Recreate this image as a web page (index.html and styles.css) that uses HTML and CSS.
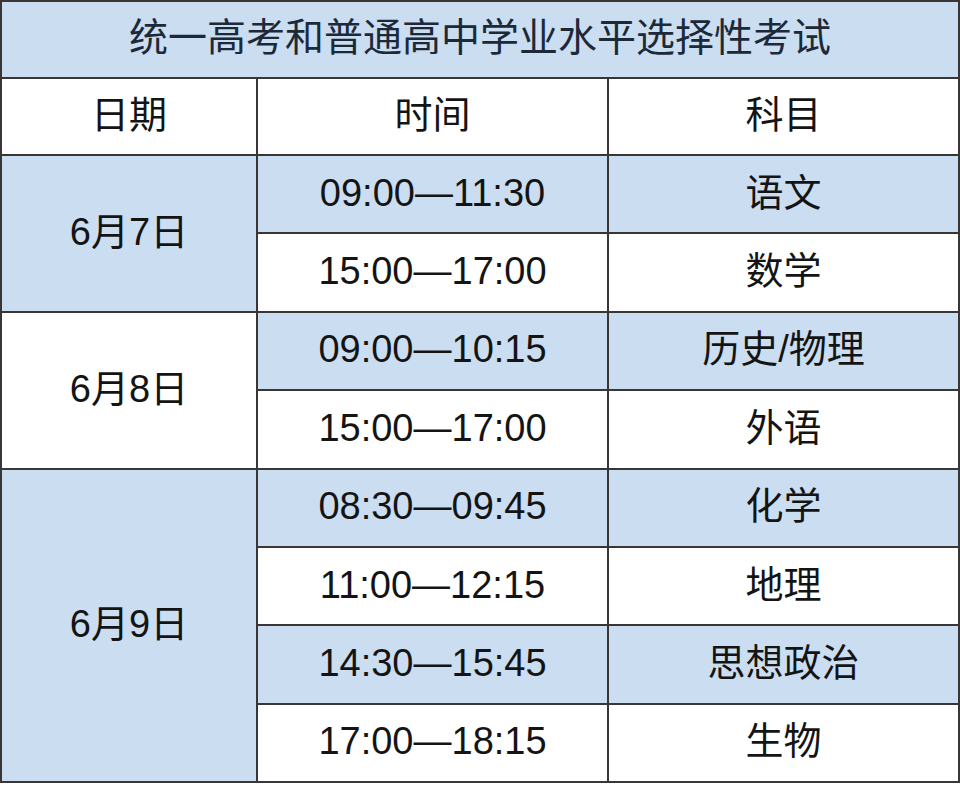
FILE: index.html
```html
<!DOCTYPE html>
<html lang="zh-CN">
<head>
<meta charset="utf-8">
<title>统一高考和普通高中学业水平选择性考试</title>
<link rel="stylesheet" href="styles.css">
</head>
<body>
<table class="schedule">
  <colgroup>
    <col class="col-date">
    <col class="col-time">
    <col class="col-subject">
  </colgroup>
  <thead>
    <tr class="title-row"><th colspan="3" class="title">统一高考和普通高中学业水平选择性考试</th></tr>
    <tr class="head-row"><th>日期</th><th>时间</th><th>科目</th></tr>
  </thead>
  <tbody>
    <tr class="blue"><td rowspan="2" class="date blue">6月7日</td><td>09:00—11:30</td><td>语文</td></tr>
    <tr><td>15:00—17:00</td><td>数学</td></tr>
    <tr class="blue"><td rowspan="2" class="date white">6月8日</td><td>09:00—10:15</td><td>历史/物理</td></tr>
    <tr><td>15:00—17:00</td><td>外语</td></tr>
    <tr class="blue"><td rowspan="4" class="date blue">6月9日</td><td>08:30—09:45</td><td>化学</td></tr>
    <tr><td>11:00—12:15</td><td>地理</td></tr>
    <tr class="blue"><td>14:30—15:45</td><td>思想政治</td></tr>
    <tr><td>17:00—18:15</td><td>生物</td></tr>
  </tbody>
</table>
</body>
</html>
```
FILE: styles.css
```css
html, body {
  margin: 0;
  padding: 0;
  background: #ffffff;
}

.schedule {
  width: 958px;
  height: 783px;
  border-collapse: collapse;
  table-layout: fixed;
  font-family: "Liberation Sans", "Noto Sans CJK SC", sans-serif;
  font-size: 38px;
  color: #141414;
}

.col-date { width: 256px; }
.col-time { width: 351px; }
.col-subject { width: 351px; }

.schedule th,
.schedule td {
  border: 2px solid #3a3636;
  text-align: center;
  vertical-align: middle;
  font-weight: normal;
  padding: 0 0 3px 0;
  height: 72px;
  line-height: 44px;
  background: #ffffff;
}

.schedule tr.blue td {
  background: #cbddf1;
}

.schedule td.date.blue {
  background: #cbddf1;
}

.schedule td.date.white {
  background: #ffffff;
}

.schedule th.title {
  background: #cbddf1;
  color: #1b2939;
  font-size: 39px;
}
```
